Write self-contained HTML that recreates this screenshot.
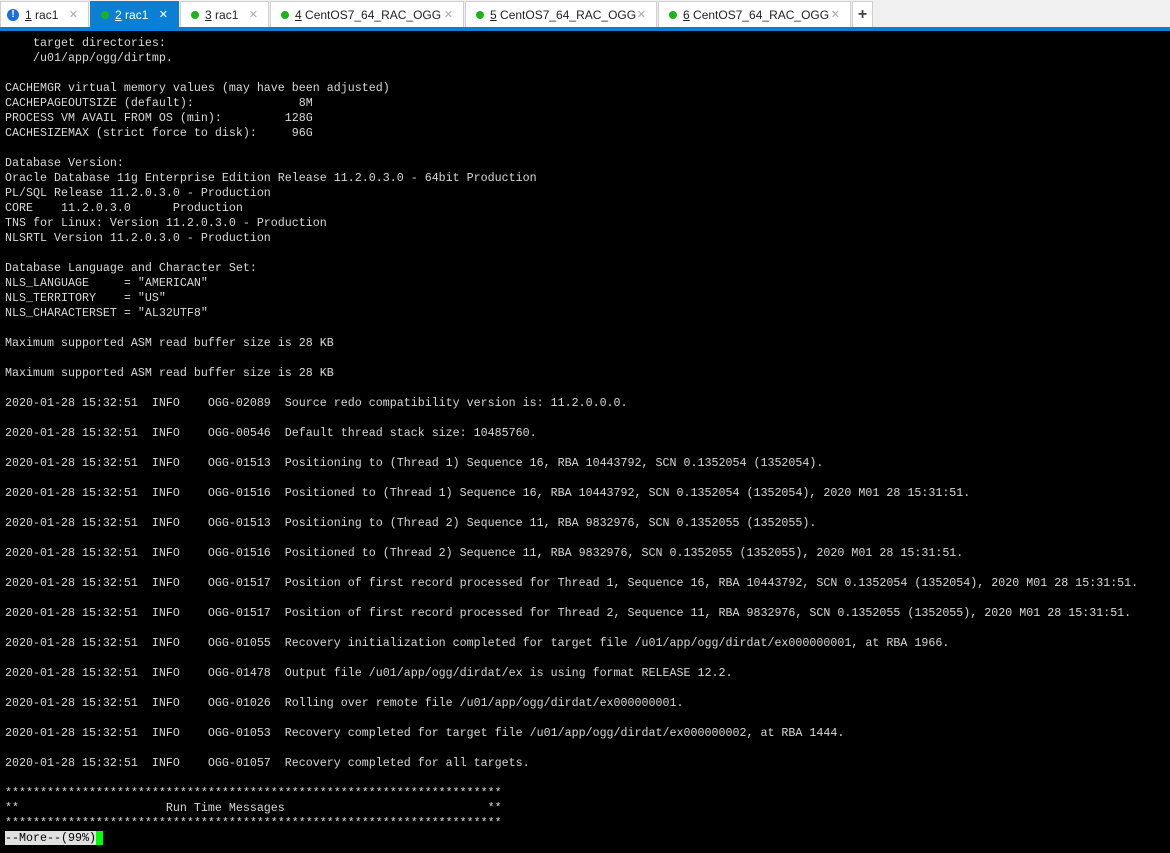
<!DOCTYPE html>
<html><head><meta charset="utf-8"><style>
body{margin:0;width:1170px;height:853px;background:#000;overflow:hidden;font-family:"Liberation Sans",sans-serif}
.bar{position:absolute;left:0;top:0;width:1170px;height:27px;background:#f0f0f0;border-bottom:4px solid #0a7fd4}
.tab{position:absolute;top:1px;height:26px;background:#fff;border:1px solid #cfcfcf;border-bottom:none;box-sizing:border-box;font-size:12px;color:#222;line-height:26px}
.tab .d{position:absolute;left:10px;top:9px;width:8px;height:8px;border-radius:50%;background:#1db31d}
.tab .t{position:absolute;left:24px}
.tab .x{position:absolute;right:10px;color:#aaa;font-size:11px}
.act{background:#0a7fd4;color:#fff;border-color:#0a7fd4}
.act .x{color:#fff}
pre{position:absolute;left:5px;top:36px;margin:0;font-family:"Liberation Mono",monospace;font-size:11.667px;line-height:15px;color:#d8d8d8}
.m{background:#e0e0e0;color:#000}
.c{background:#00ff00}
</style></head><body>
<div class="bar">
<div class="tab" style="left:0;width:89px"><span class="d" style="background:#1a6fd8;width:12px;height:12px;top:7px;left:6px;color:#fff;font-size:10px;line-height:12px;text-align:center;font-weight:bold">!</span><span class="t"><u>1</u> rac1</span><span class="x">✕</span></div>
<div class="tab act" style="left:90px;width:89px"><span class="d"></span><span class="t"><u>2</u> rac1</span><span class="x">✕</span></div>
<div class="tab" style="left:180px;width:89px"><span class="d"></span><span class="t"><u>3</u> rac1</span><span class="x">✕</span></div>
<div class="tab" style="left:270px;width:194px"><span class="d"></span><span class="t"><u>4</u> CentOS7_64_RAC_OGG</span><span class="x">✕</span></div>
<div class="tab" style="left:465px;width:192px"><span class="d"></span><span class="t"><u>5</u> CentOS7_64_RAC_OGG</span><span class="x">✕</span></div>
<div class="tab" style="left:658px;width:193px"><span class="d"></span><span class="t"><u>6</u> CentOS7_64_RAC_OGG</span><span class="x">✕</span></div>
<div class="tab" style="left:852px;width:21px;text-align:center;font-size:16px;font-weight:bold;color:#444">+</div>
</div>
<pre>    target directories:
    /u01/app/ogg/dirtmp.

CACHEMGR virtual memory values (may have been adjusted)
CACHEPAGEOUTSIZE (default):               8M
PROCESS VM AVAIL FROM OS (min):         128G
CACHESIZEMAX (strict force to disk):     96G

Database Version:
Oracle Database 11g Enterprise Edition Release 11.2.0.3.0 - 64bit Production
PL/SQL Release 11.2.0.3.0 - Production
CORE    11.2.0.3.0      Production
TNS for Linux: Version 11.2.0.3.0 - Production
NLSRTL Version 11.2.0.3.0 - Production

Database Language and Character Set:
NLS_LANGUAGE     = "AMERICAN"
NLS_TERRITORY    = "US"
NLS_CHARACTERSET = "AL32UTF8"

Maximum supported ASM read buffer size is 28 KB

Maximum supported ASM read buffer size is 28 KB

2020-01-28 15:32:51  INFO    OGG-02089  Source redo compatibility version is: 11.2.0.0.0.

2020-01-28 15:32:51  INFO    OGG-00546  Default thread stack size: 10485760.

2020-01-28 15:32:51  INFO    OGG-01513  Positioning to (Thread 1) Sequence 16, RBA 10443792, SCN 0.1352054 (1352054).

2020-01-28 15:32:51  INFO    OGG-01516  Positioned to (Thread 1) Sequence 16, RBA 10443792, SCN 0.1352054 (1352054), 2020 M01 28 15:31:51.

2020-01-28 15:32:51  INFO    OGG-01513  Positioning to (Thread 2) Sequence 11, RBA 9832976, SCN 0.1352055 (1352055).

2020-01-28 15:32:51  INFO    OGG-01516  Positioned to (Thread 2) Sequence 11, RBA 9832976, SCN 0.1352055 (1352055), 2020 M01 28 15:31:51.

2020-01-28 15:32:51  INFO    OGG-01517  Position of first record processed for Thread 1, Sequence 16, RBA 10443792, SCN 0.1352054 (1352054), 2020 M01 28 15:31:51.

2020-01-28 15:32:51  INFO    OGG-01517  Position of first record processed for Thread 2, Sequence 11, RBA 9832976, SCN 0.1352055 (1352055), 2020 M01 28 15:31:51.

2020-01-28 15:32:51  INFO    OGG-01055  Recovery initialization completed for target file /u01/app/ogg/dirdat/ex000000001, at RBA 1966.

2020-01-28 15:32:51  INFO    OGG-01478  Output file /u01/app/ogg/dirdat/ex is using format RELEASE 12.2.

2020-01-28 15:32:51  INFO    OGG-01026  Rolling over remote file /u01/app/ogg/dirdat/ex000000001.

2020-01-28 15:32:51  INFO    OGG-01053  Recovery completed for target file /u01/app/ogg/dirdat/ex000000002, at RBA 1444.

2020-01-28 15:32:51  INFO    OGG-01057  Recovery completed for all targets.

***********************************************************************
**                     Run Time Messages                             **
***********************************************************************
<span class="m">--More--(99%)</span><span class="c"> </span></pre>
</body></html>
